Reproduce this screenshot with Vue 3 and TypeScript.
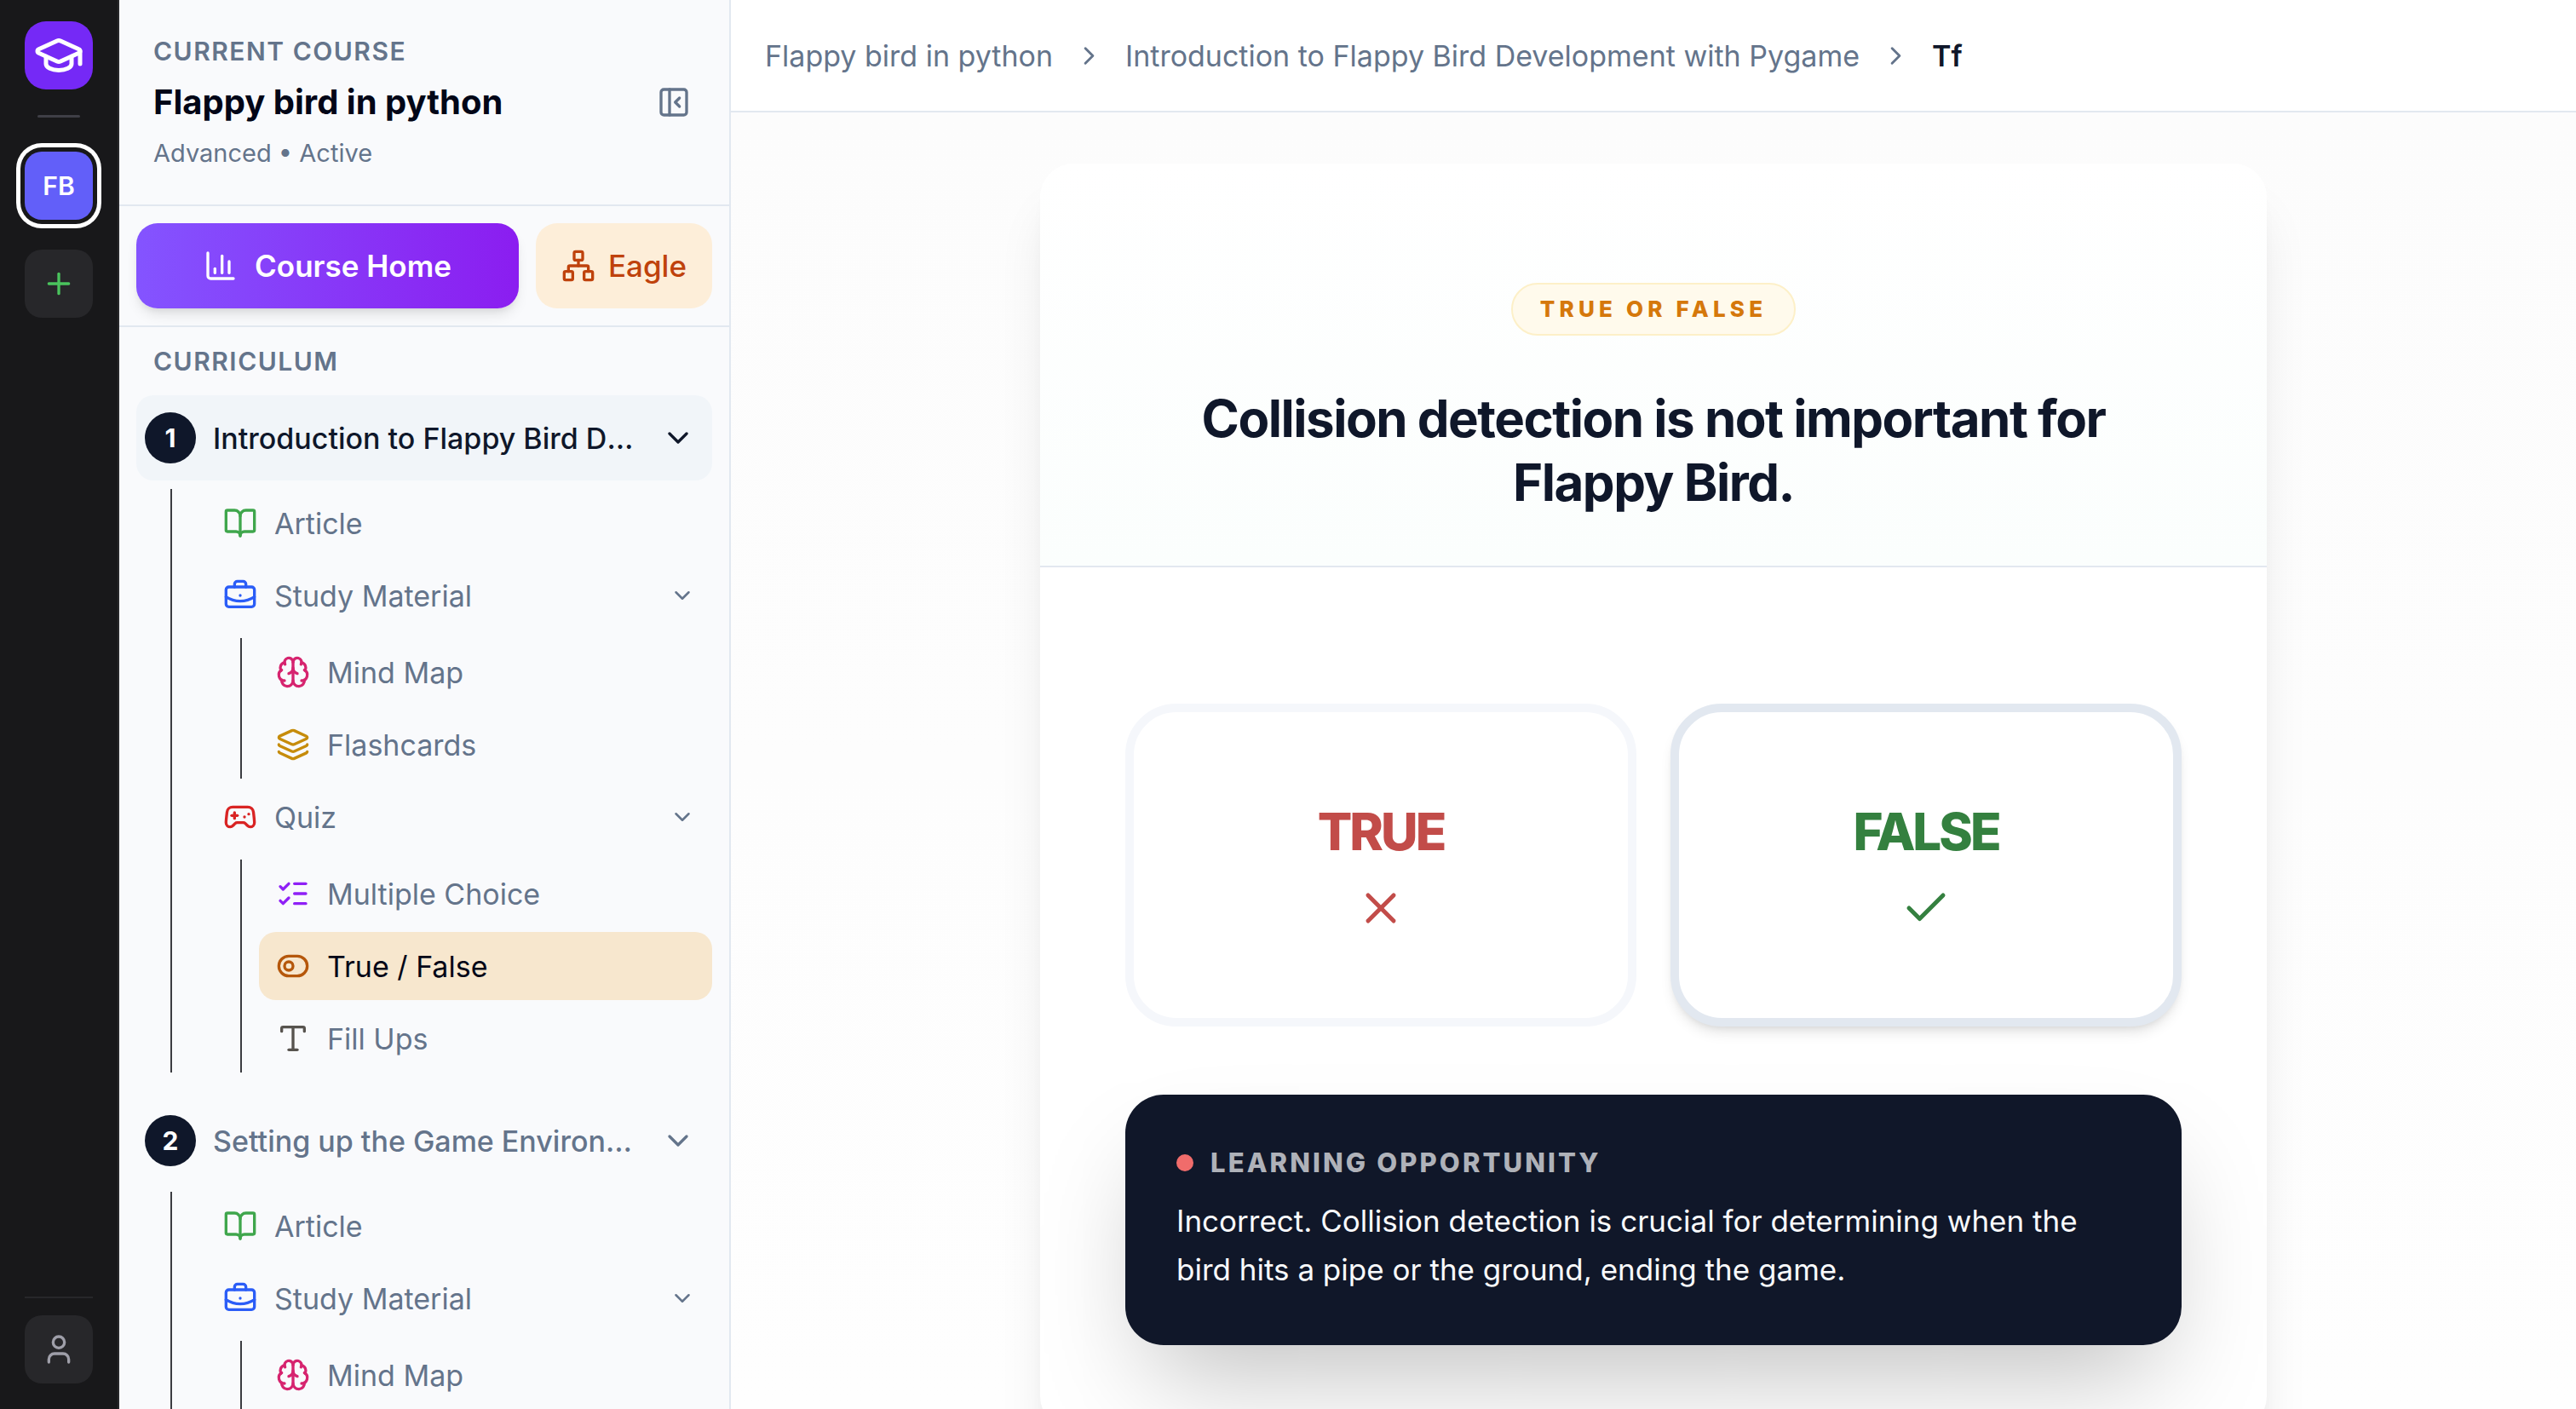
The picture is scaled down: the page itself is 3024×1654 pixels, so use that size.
<script setup lang="ts">
import { ref } from 'vue'

type IconName =
  | 'cap' | 'plus' | 'user' | 'panel' | 'chart' | 'network' | 'down' | 'right'
  | 'book' | 'briefcase' | 'brain' | 'layers' | 'gamepad' | 'checks' | 'toggle' | 'type'
  | 'cross' | 'check'

interface Item {
  id: string
  label: string
  icon: IconName
  children?: Item[]
}

interface Unit {
  id: number
  title: string
  items: Item[]
}

const icons: Record<IconName, string[]> = {
  cap: [
    'M21.42 10.922a1 1 0 0 0-.019-1.838L12.83 5.18a2 2 0 0 0-1.66 0L2.6 9.08a1 1 0 0 0 0 1.832l8.57 3.908a2 2 0 0 0 1.66 0z',
    'M22 10v6',
    'M6 12.5V16a6 3 0 0 0 12 0v-3.5',
  ],
  plus: ['M5 12h14', 'M12 5v14'],
  user: ['M19 21v-2a4 4 0 0 0-4-4H9a4 4 0 0 0-4 4v2', 'M8 7a4 4 0 1 0 8 0a4 4 0 1 0-8 0'],
  panel: ['M5 3h14a2 2 0 0 1 2 2v14a2 2 0 0 1-2 2H5a2 2 0 0 1-2-2V5a2 2 0 0 1 2-2z', 'M9 3v18', 'm16 15-3-3 3-3'],
  chart: ['M3 3v16a2 2 0 0 0 2 2h16', 'M18 17V9', 'M13 17V5', 'M8 17v-3'],
  network: [
    'M17 16h4a1 1 0 0 1 1 1v4a1 1 0 0 1-1 1h-4a1 1 0 0 1-1-1v-4a1 1 0 0 1 1-1z',
    'M3 16h4a1 1 0 0 1 1 1v4a1 1 0 0 1-1 1H3a1 1 0 0 1-1-1v-4a1 1 0 0 1 1-1z',
    'M10 2h4a1 1 0 0 1 1 1v4a1 1 0 0 1-1 1h-4a1 1 0 0 1-1-1V3a1 1 0 0 1 1-1z',
    'M5 16v-3a1 1 0 0 1 1-1h12a1 1 0 0 1 1 1v3',
    'M12 12V8',
  ],
  down: ['m6 9 6 6 6-6'],
  right: ['m9 18 6-6-6-6'],
  book: [
    'M12 7v14',
    'M3 18a1 1 0 0 1-1-1V4a1 1 0 0 1 1-1h5a4 4 0 0 1 4 4 4 4 0 0 1 4-4h5a1 1 0 0 1 1 1v13a1 1 0 0 1-1 1h-6a3 3 0 0 0-3 3 3 3 0 0 0-3-3z',
  ],
  briefcase: [
    'M12 12h.01',
    'M16 6V4a2 2 0 0 0-2-2h-4a2 2 0 0 0-2 2v2',
    'M22 13a18.15 18.15 0 0 1-20 0',
    'M4 6h16a2 2 0 0 1 2 2v10a2 2 0 0 1-2 2H4a2 2 0 0 1-2-2V8a2 2 0 0 1 2-2z',
  ],
  brain: [
    'M12 18V5',
    'M15 13a4.17 4.17 0 0 1-3-4 4.17 4.17 0 0 1-3 4',
    'M17.598 6.5A3 3 0 1 0 12 5a3 3 0 1 0-5.598 1.5',
    'M17.997 5.125a4 4 0 0 1 2.526 5.77',
    'M18 18a4 4 0 0 0 2-7.464',
    'M19.967 17.483A4 4 0 1 1 12 18a4 4 0 1 1-7.967-.517',
    'M6 18a4 4 0 0 1-2-7.464',
    'M6.003 5.125a4 4 0 0 0-2.526 5.77',
  ],
  layers: [
    'M12.83 2.18a2 2 0 0 0-1.66 0L2.6 6.08a1 1 0 0 0 0 1.83l8.58 3.91a2 2 0 0 0 1.66 0l8.58-3.9a1 1 0 0 0 0-1.83z',
    'M2 12a1 1 0 0 0 .58.91l8.6 3.91a2 2 0 0 0 1.65 0l8.58-3.9A1 1 0 0 0 22 12',
    'M2 17a1 1 0 0 0 .58.91l8.6 3.91a2 2 0 0 0 1.65 0l8.58-3.9A1 1 0 0 0 22 17',
  ],
  gamepad: [
    'M6 11h4',
    'M8 9v4',
    'M15 12h.01',
    'M18 10h.01',
    'M17.32 5H6.68a4 4 0 0 0-3.978 3.59c-.006.052-.01.101-.017.152C2.604 9.416 2 14.456 2 16a3 3 0 0 0 3 3c1 0 1.5-.5 2-1l1.414-1.414A2 2 0 0 1 9.828 16h4.344a2 2 0 0 1 1.414.586L17 18c.5.5 1 1 2 1a3 3 0 0 0 3-3c0-1.545-.604-6.584-.685-7.258-.007-.05-.011-.1-.017-.151A4 4 0 0 0 17.32 5z',
  ],
  checks: ['M13 5h8', 'M13 12h8', 'M13 19h8', 'm3 17 2 2 4-4', 'm3 7 2 2 4-4'],
  toggle: ['M9 5h6a7 7 0 0 1 0 14H9A7 7 0 0 1 9 5z', 'M6 12a3 3 0 1 0 6 0a3 3 0 1 0-6 0'],
  type: ['M12 4v16', 'M4 7V5a1 1 0 0 1 1-1h14a1 1 0 0 1 1 1v2', 'M9 20h6'],
  cross: ['M18 6 6 18', 'm6 6 12 12'],
  check: ['M20 6 9 17l-5-5'],
}

const lessonItems = (unit: number): Item[] => [
  { id: `${unit}-article`, label: 'Article', icon: 'book' },
  {
    id: `${unit}-study`,
    label: 'Study Material',
    icon: 'briefcase',
    children: [
      { id: `${unit}-map`, label: 'Mind Map', icon: 'brain' },
      { id: `${unit}-cards`, label: 'Flashcards', icon: 'layers' },
    ],
  },
  {
    id: `${unit}-quiz`,
    label: 'Quiz',
    icon: 'gamepad',
    children: [
      { id: `${unit}-mcq`, label: 'Multiple Choice', icon: 'checks' },
      { id: `${unit}-tf`, label: 'True / False', icon: 'toggle' },
      { id: `${unit}-fill`, label: 'Fill Ups', icon: 'type' },
    ],
  },
]

const units: Unit[] = [
  { id: 1, title: 'Introduction to Flappy Bird Development with Pygame', items: lessonItems(1) },
  { id: 2, title: 'Setting up the Game Environment', items: lessonItems(2) },
]

const activeUnit = ref(1)
const activeItem = ref('1-tf')
</script>

<template>
  <div class="app">
    <nav class="rail" aria-label="Courses">
      <button class="tile logo" type="button" aria-label="Home">
        <svg class="icon xl" viewBox="0 0 24 24"><path v-for="d in icons.cap" :key="d" :d="d" /></svg>
      </button>
      <span class="rail-mark"></span>
      <button class="tile course" type="button">FB</button>
      <button class="tile add" type="button" aria-label="Add course">
        <svg class="icon" viewBox="0 0 24 24"><path v-for="d in icons.plus" :key="d" :d="d" /></svg>
      </button>
      <div class="rail-foot">
        <button class="tile account" type="button" aria-label="Account">
          <svg class="icon" viewBox="0 0 24 24"><path v-for="d in icons.user" :key="d" :d="d" /></svg>
        </button>
      </div>
    </nav>

    <aside class="sidebar">
      <header class="course-head">
        <p class="eyebrow">CURRENT COURSE</p>
        <div class="course-row">
          <h2>Flappy bird in python</h2>
          <button class="collapse" type="button" aria-label="Collapse sidebar">
            <svg class="icon" viewBox="0 0 24 24"><path v-for="d in icons.panel" :key="d" :d="d" /></svg>
          </button>
        </div>
        <p class="status">Advanced • Active</p>
      </header>

      <div class="actions">
        <button class="home" type="button">
          <svg class="icon" viewBox="0 0 24 24"><path v-for="d in icons.chart" :key="d" :d="d" /></svg>
          Course Home
        </button>
        <button class="eagle" type="button">
          <svg class="icon" viewBox="0 0 24 24"><path v-for="d in icons.network" :key="d" :d="d" /></svg>
          Eagle
        </button>
      </div>

      <div class="curriculum">
        <p class="eyebrow section">CURRICULUM</p>
        <section v-for="unit in units" :key="unit.id" class="unit">
          <button
            class="unit-head"
            :class="{ active: unit.id === activeUnit }"
            type="button"
            @click="activeUnit = unit.id"
          >
            <span class="number">{{ unit.id }}</span>
            <span class="unit-title">{{ unit.title }}</span>
            <svg class="icon" viewBox="0 0 24 24"><path :d="icons.down[0]" /></svg>
          </button>
          <ul class="tree">
            <li v-for="item in unit.items" :key="item.id">
              <button class="item" type="button">
                <svg class="icon" :class="item.icon" viewBox="0 0 24 24">
                  <path v-for="d in icons[item.icon]" :key="d" :d="d" />
                </svg>
                <span class="label">{{ item.label }}</span>
                <svg v-if="item.children" class="icon small" viewBox="0 0 24 24"><path :d="icons.down[0]" /></svg>
              </button>
              <ul v-if="item.children" class="subtree">
                <li v-for="child in item.children" :key="child.id">
                  <button
                    class="item"
                    :class="{ active: child.id === activeItem }"
                    type="button"
                    @click="activeItem = child.id"
                  >
                    <svg class="icon" :class="child.icon" viewBox="0 0 24 24">
                      <path v-for="d in icons[child.icon]" :key="d" :d="d" />
                    </svg>
                    <span class="label">{{ child.label }}</span>
                  </button>
                </li>
              </ul>
            </li>
          </ul>
        </section>
      </div>
    </aside>

    <div class="page">
      <nav class="crumbs" aria-label="Breadcrumb">
        <a href="#course">Flappy bird in python</a>
        <svg class="icon medium" viewBox="0 0 24 24"><path :d="icons.right[0]" /></svg>
        <a href="#unit">Introduction to Flappy Bird Development with Pygame</a>
        <svg class="icon medium" viewBox="0 0 24 24"><path :d="icons.right[0]" /></svg>
        <span class="here">Tf</span>
      </nav>

      <main class="content">
        <article class="card">
          <header class="question">
            <span class="badge">TRUE OR FALSE</span>
            <h1>Collision detection is not important for Flappy Bird.</h1>
          </header>
          <div class="answer">
            <div class="options">
              <button class="option wrong" type="button">
                <span>TRUE</span>
                <svg class="icon xl" viewBox="0 0 24 24"><path v-for="d in icons.cross" :key="d" :d="d" /></svg>
              </button>
              <button class="option correct" type="button">
                <span>FALSE</span>
                <svg class="icon xl" viewBox="0 0 24 24"><path v-for="d in icons.check" :key="d" :d="d" /></svg>
              </button>
            </div>
            <section class="feedback">
              <h3><span class="dot"></span>LEARNING OPPORTUNITY</h3>
              <p>
                Incorrect. Collision detection is crucial for determining when the bird hits a pipe or the
                ground, ending the game.
              </p>
            </section>
          </div>
        </article>
      </main>
    </div>
  </div>
</template>

<style>
body {
  overflow: hidden;
}
</style>

<style scoped>
.app {
  display: flex;
  height: 100vh;
  overflow: hidden;
  font-family: Inter, 'Liberation Sans', sans-serif;
  font-size: 34px;
  line-height: 51px;
  color: #64748b;
}

.app * {
  box-sizing: border-box;
}

button {
  margin: 0;
  padding: 0;
  border: 0;
  background: none;
  color: inherit;
  font: inherit;
  cursor: pointer;
}

h1,
h2,
h3,
p,
ul {
  margin: 0;
  padding: 0;
  list-style: none;
}

.icon {
  flex: none;
  display: block;
  width: 40px;
  height: 40px;
  fill: none;
  stroke: currentColor;
  stroke-width: 2;
  stroke-linecap: round;
  stroke-linejoin: round;
}

.icon.small {
  width: 30px;
  height: 30px;
}

.icon.medium {
  width: 35px;
  height: 35px;
}

.icon.xl {
  width: 60px;
  height: 60px;
}

/* Course rail */
.rail {
  flex: none;
  display: flex;
  flex-direction: column;
  align-items: center;
  width: 140px;
  padding: 25px 0 30px;
  border-right: 2px solid #27272a;
  background: #18181a;
}

.tile {
  display: grid;
  place-items: center;
  width: 80px;
  height: 80px;
  border-radius: 20px;
  background: #27272a;
}

.logo {
  border-radius: 25px;
  background: #7529f6;
  color: #fff;
}

.rail-mark {
  width: 50px;
  height: 3px;
  margin: 30px 0 40px;
  border-radius: 2px;
  background: #3f3f46;
}

.course {
  background: #625ff9;
  color: #fff;
  font-size: 30px;
  font-weight: 600;
  box-shadow: 0 0 0 5px #18181a, 0 0 0 10px #fff;
}

.add {
  margin-top: 35px;
  color: #4ac45d;
}

.rail-foot {
  margin-top: auto;
  padding-top: 20px;
  border-top: 2px solid #27272a;
}

.account {
  color: #9f9fa9;
}

/* Sidebar */
.sidebar {
  flex: none;
  display: flex;
  flex-direction: column;
  width: 718px;
  border-right: 2px solid #e2e8f0;
  background: #f9fafc;
}

.course-head {
  padding: 40px;
  border-bottom: 2px solid #e2e8f0;
}

.eyebrow {
  font-size: 30px;
  line-height: 40px;
  font-weight: 600;
  letter-spacing: 0.05em;
}

.course-row {
  display: flex;
  align-items: center;
  justify-content: space-between;
  margin: 10px 0;
}

.course-row h2 {
  font-size: 40px;
  line-height: 60px;
  font-weight: 700;
  color: #020617;
}

.collapse {
  display: grid;
  place-items: center;
  width: 50px;
  height: 50px;
}

.status {
  font-size: 29px;
  line-height: 40px;
}

.actions {
  display: flex;
  gap: 20px;
  padding: 20px;
  border-bottom: 2px solid #e2e8f0;
}

.home,
.eagle {
  display: flex;
  align-items: center;
  justify-content: center;
  height: 100px;
  border-radius: 25px;
  font-size: 35px;
  font-weight: 500;
}

.home {
  flex: 1;
  gap: 20px;
  background: linear-gradient(90deg, #8454ff, #8b1df0);
  box-shadow: 0 10px 15px -3px rgba(0, 0, 0, 0.1), 0 5px 10px -5px rgba(0, 0, 0, 0.1);
  color: #fff;
  font-weight: 600;
}

.eagle {
  gap: 15px;
  padding: 0 30px;
  background: #fdeed9;
  color: #bf420c;
}

.curriculum {
  flex: 1;
  min-height: 0;
  overflow-y: auto;
  scrollbar-width: none;
  padding: 20px;
}

.section {
  padding: 0 20px;
  margin-bottom: 20px;
}

.unit {
  margin-bottom: 30px;
}

.unit-head {
  display: flex;
  align-items: center;
  gap: 20px;
  width: 100%;
  height: 100px;
  padding: 0 20px 0 10px;
  border-radius: 20px;
  font-weight: 500;
  text-align: left;
}

.unit-head.active {
  background: #f1f5f9;
  color: #0f172a;
}

.number {
  flex: none;
  display: grid;
  place-items: center;
  width: 60px;
  height: 60px;
  border-radius: 50%;
  background: #0f172a;
  color: #fff;
  font-size: 30px;
  font-weight: 700;
}

.unit-title {
  flex: 1;
  overflow: hidden;
  white-space: nowrap;
  text-overflow: ellipsis;
}

.tree {
  margin: 10px 0 0 40px;
  padding-left: 40px;
  border-left: 2px solid #3b3c41;
}

.tree > li + li,
.subtree > li + li {
  margin-top: 5px;
}

.subtree {
  margin: 10px 0 0 40px;
  padding-left: 20px;
  border-left: 2px solid #3b3c41;
}

.item {
  display: flex;
  align-items: center;
  gap: 20px;
  width: 100%;
  height: 80px;
  padding: 0 20px;
  border-radius: 20px;
  text-align: left;
}

.item.active {
  background: #f7e7ce;
  color: #020617;
}

.label {
  flex: 1;
}

.book {
  color: #3fa64c;
}

.briefcase {
  color: #2b5df7;
}

.brain {
  color: #d6246f;
}

.layers {
  color: #c68c0b;
}

.gamepad {
  color: #d92424;
}

.checks {
  color: #8f20f6;
}

.toggle {
  color: #b5570b;
}

.type {
  color: #57534e;
}

/* Page */
.page {
  flex: 1;
  min-width: 0;
  display: flex;
  flex-direction: column;
}

.crumbs {
  flex: none;
  display: flex;
  align-items: center;
  gap: 25px;
  height: 132px;
  padding: 0 40px;
  border-bottom: 2px solid #e2e8f0;
  background: #fff;
}

.crumbs a {
  color: inherit;
  text-decoration: none;
}

.here {
  color: #0f172a;
  font-weight: 600;
}

.content {
  flex: 1;
  min-height: 0;
  overflow-y: auto;
  scrollbar-width: none;
  padding: 60px 40px;
  background: linear-gradient(#fcfcfc, #fefefe);
}

.card {
  max-width: 1440px;
  margin: 0 auto;
  border-radius: 40px;
  background: #fff;
  box-shadow: 0 50px 62px -12px rgba(0, 0, 0, 0.1), 0 20px 25px -15px rgba(0, 0, 0, 0.1);
}

.question {
  display: flex;
  flex-direction: column;
  align-items: center;
  padding: 140px 100px 60px;
  border-bottom: 2px solid #e2e8f0;
  border-radius: 40px 40px 0 0;
  background: linear-gradient(#fff, #fbfefd);
}

.badge {
  padding: 0 32px;
  border: 2px solid #fdf0c8;
  border-radius: 31px;
  background: #fffaec;
  color: #d5780b;
  font-size: 26px;
  line-height: 58px;
  font-weight: 800;
  letter-spacing: 0.2em;
}

.question h1 {
  margin-top: 60px;
  color: #0f172a;
  font-size: 60px;
  line-height: 75px;
  font-weight: 700;
  letter-spacing: -0.025em;
  text-align: center;
}

.answer {
  padding: 160px 100px 100px;
}

.options {
  display: flex;
  gap: 40px;
}

.option {
  flex: 1;
  display: flex;
  flex-direction: column;
  align-items: center;
  justify-content: center;
  gap: 20px;
  height: 379px;
  border: 10px solid #e2e8f0;
  border-radius: 60px;
  background: #fff;
  font-size: 60px;
  line-height: 80px;
  font-weight: 800;
  letter-spacing: -0.05em;
}

.wrong {
  border-color: #f5f7fb;
  color: #c24c49;
}

.correct {
  box-shadow: 0 10px 15px -3px rgba(0, 0, 0, 0.1), 0 5px 10px -5px rgba(0, 0, 0, 0.1);
  color: #34803f;
}

.feedback {
  margin-top: 80px;
  padding: 60px;
  border-radius: 45px;
  background: #101729;
  box-shadow: 0 62px 125px -30px rgba(0, 0, 0, 0.25);
  color: #f8fafc;
}

.feedback h3 {
  display: flex;
  align-items: center;
  gap: 20px;
  margin-bottom: 20px;
  color: #afb2b9;
  font-size: 31px;
  line-height: 40px;
  font-weight: 800;
  letter-spacing: 0.1em;
}

.dot {
  width: 20px;
  height: 20px;
  border-radius: 50%;
  background: #f06c6b;
}

.feedback p {
  max-width: 1100px;
  font-size: 35px;
  line-height: 57px;
  font-weight: 400;
}
</style>
